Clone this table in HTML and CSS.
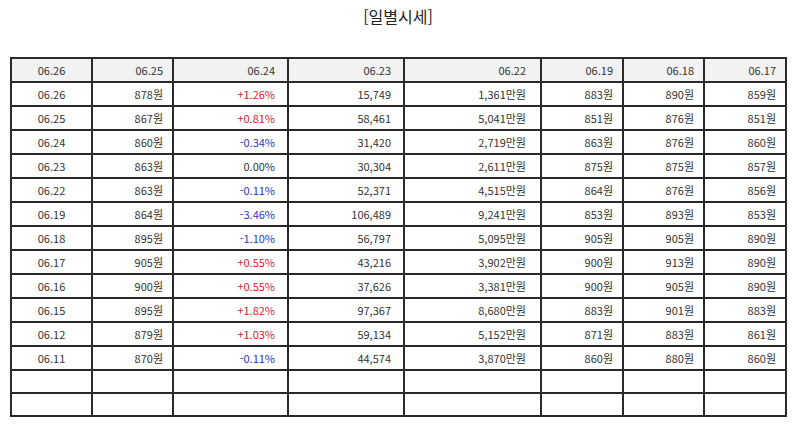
FILE: index.html
```
<!DOCTYPE html>
<html lang="ko">
<head>
<meta charset="utf-8">
<title>일별시세</title>
<link rel="stylesheet" href="styles.css">
</head>
<body>
<div class="page">
  <h2 class="title">[일별시세]</h2>
  <table class="quotes">
    <colgroup>
      <col class="c1"><col class="c2"><col class="c3"><col class="c4"><col class="c5"><col class="c6"><col class="c7"><col class="c8">
    </colgroup>
    <thead>
      <tr><th class="date">06.26</th><th>06.25</th><th class="pct">06.24</th><th class="vol">06.23</th><th class="amt">06.22</th><th>06.19</th><th>06.18</th><th>06.17</th></tr>
    </thead>
    <tbody>
      <tr><td class="date">06.26</td><td>878원</td><td class="pct up">+1.26%</td><td class="vol">15,749</td><td class="amt">1,361만원</td><td>883원</td><td>890원</td><td>859원</td></tr>
      <tr><td class="date">06.25</td><td>867원</td><td class="pct up">+0.81%</td><td class="vol">58,461</td><td class="amt">5,041만원</td><td>851원</td><td>876원</td><td>851원</td></tr>
      <tr><td class="date">06.24</td><td>860원</td><td class="pct down">-0.34%</td><td class="vol">31,420</td><td class="amt">2,719만원</td><td>863원</td><td>876원</td><td>860원</td></tr>
      <tr><td class="date">06.23</td><td>863원</td><td class="pct">0.00%</td><td class="vol">30,304</td><td class="amt">2,611만원</td><td>875원</td><td>875원</td><td>857원</td></tr>
      <tr><td class="date">06.22</td><td>863원</td><td class="pct down">-0.11%</td><td class="vol">52,371</td><td class="amt">4,515만원</td><td>864원</td><td>876원</td><td>856원</td></tr>
      <tr><td class="date">06.19</td><td>864원</td><td class="pct down">-3.46%</td><td class="vol">106,489</td><td class="amt">9,241만원</td><td>853원</td><td>893원</td><td>853원</td></tr>
      <tr><td class="date">06.18</td><td>895원</td><td class="pct down">-1.10%</td><td class="vol">56,797</td><td class="amt">5,095만원</td><td>905원</td><td>905원</td><td>890원</td></tr>
      <tr><td class="date">06.17</td><td>905원</td><td class="pct up">+0.55%</td><td class="vol">43,216</td><td class="amt">3,902만원</td><td>900원</td><td>913원</td><td>890원</td></tr>
      <tr><td class="date">06.16</td><td>900원</td><td class="pct up">+0.55%</td><td class="vol">37,626</td><td class="amt">3,381만원</td><td>900원</td><td>905원</td><td>890원</td></tr>
      <tr><td class="date">06.15</td><td>895원</td><td class="pct up">+1.82%</td><td class="vol">97,367</td><td class="amt">8,680만원</td><td>883원</td><td>901원</td><td>883원</td></tr>
      <tr><td class="date">06.12</td><td>879원</td><td class="pct up">+1.03%</td><td class="vol">59,134</td><td class="amt">5,152만원</td><td>871원</td><td>883원</td><td>861원</td></tr>
      <tr><td class="date">06.11</td><td>870원</td><td class="pct down">-0.11%</td><td class="vol">44,574</td><td class="amt">3,870만원</td><td>860원</td><td>880원</td><td>860원</td></tr>
      <tr class="empty"><td></td><td></td><td></td><td></td><td></td><td></td><td></td><td></td></tr>
      <tr class="empty"><td></td><td></td><td></td><td></td><td></td><td></td><td></td><td></td></tr>
    </tbody>
  </table>
</div>
</body>
</html>
```

FILE: styles.css
```
html, body {
  margin: 0;
  padding: 0;
  background: #ffffff;
}

body {
  font-family: "Noto Sans CJK KR", "Noto Sans", sans-serif;
  color: #333333;
}

.page {
  padding: 0 8px 0 10px;
}

.title {
  margin: 0;
  padding-top: 5px;
  height: 57px;
  box-sizing: border-box;
  text-align: center;
  font-size: 16px;
  font-weight: normal;
  line-height: 22px;
  color: #222222;
}

.quotes {
  width: 775px;
  border-collapse: collapse;
  table-layout: fixed;
  font-size: 11px;
}

.quotes tr {
  height: 24px;
}

.quotes tr.empty {
  height: 23px;
}

.c1 { width: 81px; }
.c2 { width: 81px; }
.c3 { width: 115px; }
.c4 { width: 116px; }
.c5 { width: 137px; }
.c6 { width: 82px; }
.c7 { width: 81px; }
.c8 { width: 82px; }

.quotes th,
.quotes td {
  border: 2px solid #2a2a2a;
  padding: 0 9px 0 0;
  text-align: right;
  font-weight: normal;
  line-height: 14px;
  white-space: nowrap;
  color: #333333;
}

.quotes th {
  background: #f2f2f2;
}

.quotes .date {
  text-align: center;
  padding: 0;
}

.quotes .pct { padding-right: 12px; }
.quotes .vol { padding-right: 12px; }
.quotes .amt { padding-right: 14px; }

.quotes .up { color: #e0202a; }
.quotes .down { color: #3232c8; }
```
